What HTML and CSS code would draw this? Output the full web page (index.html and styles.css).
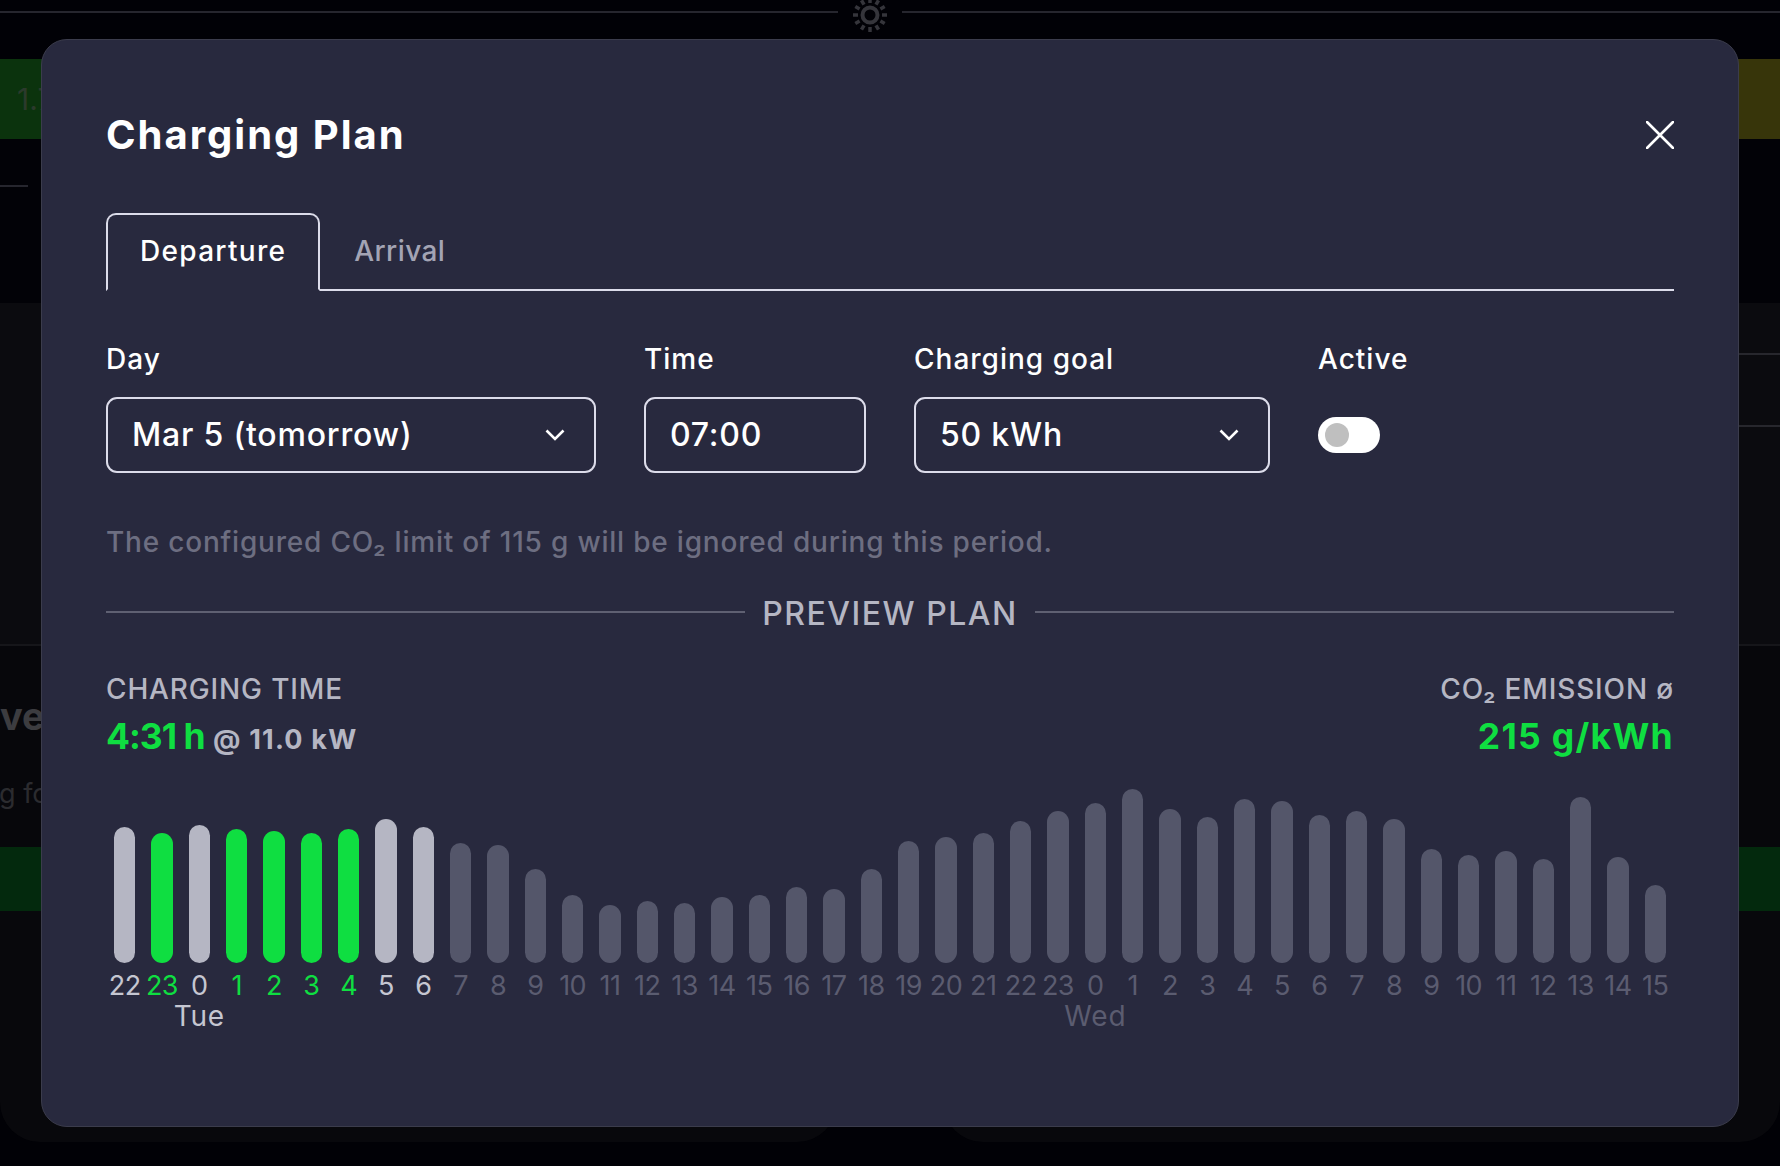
FILE: index.html
```html
<!DOCTYPE html>
<html>
    <head>
        <meta charset="utf-8" />
        <title>Charging Plan</title>
        <link rel="stylesheet" href="styles.css">
    </head>
    <body>
        <div class="page">
            <div class="top-bar">
                <div class="top-line left"></div>
                <svg class="sun" viewBox="0 0 40 40" width="40" height="40">
                    <circle cx="20" cy="20" r="7.5" />
                    <path d="M20 3v5M20 32v5M3 20h5M32 20h5M11.5 5.3l2.5 4.3M26 30.4l2.5 4.3M5.3 11.5l4.3 2.5M30.4 26l4.3 2.5M5.3 28.5l4.3-2.5M30.4 14l4.3-2.5M11.5 34.7l2.5-4.3M26 9.6l2.5-4.3" />
                </svg>
                <div class="top-line"></div>
            </div>
            <div class="band-row">
                <div class="band-green">1.7</div>
                <div class="band-yellow"></div>
            </div>
            <div class="dim-section">
                <div class="dim-line"></div>
            </div>
            <div class="dim-section-2">
                <div class="side-line"></div>
                <div class="side-line second"></div>
            </div>
            <div class="dim-section-3">
                <div class="dim-title">ve</div>
                <div class="dim-text">g fo</div>
            </div>
            <div class="band-wide"></div>
            <div class="bottom-cards">
                <div class="bottom-card"></div>
                <div class="bottom-card"></div>
            </div>
        </div>

        <div class="modal">
            <div class="modal-head">
                <h1>Charging Plan</h1>
                <svg class="close" viewBox="0 0 28 28" width="28" height="28">
                    <path d="M1 1l26 26M27 1L1 27" />
                </svg>
            </div>

            <div class="tabs">
                <div class="tab active">Departure</div>
                <div class="tab">Arrival</div>
            </div>

            <div class="form">
                <div>
                    <label for="day">Day</label>
                    <div class="select-wrap">
                        <select id="day" class="control">
                            <option>Mar 5 (tomorrow)</option>
                        </select>
                        <svg class="chevron" viewBox="0 0 20 12" width="20" height="12">
                            <path d="M1.5 1.5L10 10l8.5-8.5" />
                        </svg>
                    </div>
                </div>
                <div>
                    <label for="time">Time</label>
                    <input id="time" class="control" type="text" value="07:00" />
                </div>
                <div>
                    <label for="goal">Charging goal</label>
                    <div class="select-wrap">
                        <select id="goal" class="control">
                            <option>50 kWh</option>
                        </select>
                        <svg class="chevron" viewBox="0 0 20 12" width="20" height="12">
                            <path d="M1.5 1.5L10 10l8.5-8.5" />
                        </svg>
                    </div>
                </div>
                <div>
                    <label>Active</label>
                    <div class="toggle-wrap">
                        <div class="toggle"><div class="knob"></div></div>
                    </div>
                </div>
            </div>

            <p class="note">The configured CO₂ limit of 115 g will be ignored during this period.</p>

            <div class="divider">
                <div class="divider-line"></div>
                <span>PREVIEW PLAN</span>
                <div class="divider-line"></div>
            </div>

            <div class="summary">
                <div>
                    <div class="summary-label">CHARGING TIME</div>
                    <div class="summary-value"><span class="duration">4:31 h</span> <small>@ 11.0 kW</small></div>
                </div>
                <div class="summary-right">
                    <div class="summary-label">CO₂ EMISSION ø</div>
                    <div class="summary-value emission">215 g/kWh</div>
                </div>
            </div>

            <div class="chart">
                <div class="slot plan"><div class="bar-area"><div class="bar" style="height: 136px"></div></div><div class="hour">22</div></div>
                <div class="slot charge"><div class="bar-area"><div class="bar" style="height: 130px"></div></div><div class="hour">23</div></div>
                <div class="slot plan"><div class="bar-area"><div class="bar" style="height: 138px"></div></div><div class="hour">0</div><div class="day">Tue</div></div>
                <div class="slot charge"><div class="bar-area"><div class="bar" style="height: 134px"></div></div><div class="hour">1</div></div>
                <div class="slot charge"><div class="bar-area"><div class="bar" style="height: 132px"></div></div><div class="hour">2</div></div>
                <div class="slot charge"><div class="bar-area"><div class="bar" style="height: 130px"></div></div><div class="hour">3</div></div>
                <div class="slot charge"><div class="bar-area"><div class="bar" style="height: 134px"></div></div><div class="hour">4</div></div>
                <div class="slot plan"><div class="bar-area"><div class="bar" style="height: 144px"></div></div><div class="hour">5</div></div>
                <div class="slot plan"><div class="bar-area"><div class="bar" style="height: 136px"></div></div><div class="hour">6</div></div>
                <div class="slot"><div class="bar-area"><div class="bar" style="height: 120px"></div></div><div class="hour">7</div></div>
                <div class="slot"><div class="bar-area"><div class="bar" style="height: 118px"></div></div><div class="hour">8</div></div>
                <div class="slot"><div class="bar-area"><div class="bar" style="height: 94px"></div></div><div class="hour">9</div></div>
                <div class="slot"><div class="bar-area"><div class="bar" style="height: 68px"></div></div><div class="hour">10</div></div>
                <div class="slot"><div class="bar-area"><div class="bar" style="height: 58px"></div></div><div class="hour">11</div></div>
                <div class="slot"><div class="bar-area"><div class="bar" style="height: 62px"></div></div><div class="hour">12</div></div>
                <div class="slot"><div class="bar-area"><div class="bar" style="height: 60px"></div></div><div class="hour">13</div></div>
                <div class="slot"><div class="bar-area"><div class="bar" style="height: 66px"></div></div><div class="hour">14</div></div>
                <div class="slot"><div class="bar-area"><div class="bar" style="height: 68px"></div></div><div class="hour">15</div></div>
                <div class="slot"><div class="bar-area"><div class="bar" style="height: 76px"></div></div><div class="hour">16</div></div>
                <div class="slot"><div class="bar-area"><div class="bar" style="height: 74px"></div></div><div class="hour">17</div></div>
                <div class="slot"><div class="bar-area"><div class="bar" style="height: 94px"></div></div><div class="hour">18</div></div>
                <div class="slot"><div class="bar-area"><div class="bar" style="height: 122px"></div></div><div class="hour">19</div></div>
                <div class="slot"><div class="bar-area"><div class="bar" style="height: 126px"></div></div><div class="hour">20</div></div>
                <div class="slot"><div class="bar-area"><div class="bar" style="height: 130px"></div></div><div class="hour">21</div></div>
                <div class="slot"><div class="bar-area"><div class="bar" style="height: 142px"></div></div><div class="hour">22</div></div>
                <div class="slot"><div class="bar-area"><div class="bar" style="height: 152px"></div></div><div class="hour">23</div></div>
                <div class="slot"><div class="bar-area"><div class="bar" style="height: 160px"></div></div><div class="hour">0</div><div class="day">Wed</div></div>
                <div class="slot"><div class="bar-area"><div class="bar" style="height: 174px"></div></div><div class="hour">1</div></div>
                <div class="slot"><div class="bar-area"><div class="bar" style="height: 154px"></div></div><div class="hour">2</div></div>
                <div class="slot"><div class="bar-area"><div class="bar" style="height: 146px"></div></div><div class="hour">3</div></div>
                <div class="slot"><div class="bar-area"><div class="bar" style="height: 164px"></div></div><div class="hour">4</div></div>
                <div class="slot"><div class="bar-area"><div class="bar" style="height: 162px"></div></div><div class="hour">5</div></div>
                <div class="slot"><div class="bar-area"><div class="bar" style="height: 148px"></div></div><div class="hour">6</div></div>
                <div class="slot"><div class="bar-area"><div class="bar" style="height: 152px"></div></div><div class="hour">7</div></div>
                <div class="slot"><div class="bar-area"><div class="bar" style="height: 144px"></div></div><div class="hour">8</div></div>
                <div class="slot"><div class="bar-area"><div class="bar" style="height: 114px"></div></div><div class="hour">9</div></div>
                <div class="slot"><div class="bar-area"><div class="bar" style="height: 108px"></div></div><div class="hour">10</div></div>
                <div class="slot"><div class="bar-area"><div class="bar" style="height: 112px"></div></div><div class="hour">11</div></div>
                <div class="slot"><div class="bar-area"><div class="bar" style="height: 104px"></div></div><div class="hour">12</div></div>
                <div class="slot"><div class="bar-area"><div class="bar" style="height: 166px"></div></div><div class="hour">13</div></div>
                <div class="slot"><div class="bar-area"><div class="bar" style="height: 106px"></div></div><div class="hour">14</div></div>
                <div class="slot"><div class="bar-area"><div class="bar" style="height: 78px"></div></div><div class="hour">15</div></div>
            </div>
        </div>
    </body>
</html>
```

FILE: styles.css
```css
html, body {
    margin: 0;
    padding: 0;
    height: 100%;
    overflow: hidden;
}
body {
    background: #010106;
    font-family: Inter, "Noto Sans", sans-serif;
    color: #fff;
}

/* dimmed page behind the dialog */
.page {
    height: 1166px;
    display: flex;
    flex-direction: column;
}
.top-bar {
    height: 59px;
    display: flex;
    gap: 12px;
    flex-shrink: 0;
}
.top-line {
    flex: 1;
    height: 2px;
    margin-top: 11px;
    background: #26262e;
}
.top-line.left {
    flex: none;
    width: 838px;
}
.sun {
    margin-top: -5px;
}
.sun circle {
    fill: none;
    stroke: #35353b;
    stroke-width: 4;
}
.sun path {
    fill: none;
    stroke: #35353b;
    stroke-width: 3.5;
}
.band-row {
    height: 80px;
    display: flex;
}
.band-green {
    flex: 1;
    background: #0b330d;
    color: #2b3a2c;
    font-size: 30px;
    line-height: 80px;
    padding-left: 17px;
}
.band-yellow {
    flex: 1;
    background: #37350a;
}
.dim-section {
    height: 164px;
    background: #020207;
    padding-top: 46px;
    box-sizing: border-box;
}
.dim-line {
    width: 28px;
    height: 2px;
    background: #26262e;
}
.dim-section-2 {
    height: 341px;
    background: #0b0b0f;
    padding-top: 50px;
    box-sizing: border-box;
}
.side-line {
    height: 2px;
    margin-left: 50%;
    background: #27272d;
}
.side-line.second {
    margin-top: 70px;
}
.dim-section-3 {
    height: 203px;
    background: #07070b;
    border-top: 2px solid #16161a;
    box-sizing: border-box;
    overflow: hidden;
    padding-top: 48px;
}
.dim-title {
    font-size: 38px;
    font-weight: 700;
    line-height: 44px;
    color: #3c3c40;
}
.dim-text {
    margin-top: 39px;
    margin-left: -1px;
    font-size: 27px;
    line-height: 34px;
    color: #2b2b2f;
}
.band-wide {
    height: 64px;
    background: #03290d;
}
.bottom-cards {
    height: 231px;
    display: flex;
    gap: 106px;
}
.bottom-card {
    flex: 1;
    background: #08080c;
    border-radius: 0 0 40px 40px;
}

/* dialog */
.modal {
    position: absolute;
    left: 41px;
    top: 39px;
    width: 1698px;
    height: 1088px;
    box-sizing: border-box;
    padding: 64px 64px 0;
    background: #28293e;
    border: 1px solid #3b3c4c;
    border-radius: 26px;
}
.modal-head {
    display: flex;
    justify-content: space-between;
    align-items: center;
    height: 62px;
}
h1 {
    margin: -2px 0 0;
    font-size: 40px;
    font-weight: 700;
    letter-spacing: 2px;
}
.close path {
    fill: none;
    stroke: #fff;
    stroke-width: 2.6;
    stroke-linecap: round;
}
.tabs {
    display: flex;
    height: 78px;
    margin-top: 47px;
    box-sizing: border-box;
    border-bottom: 2px solid #dcdcea;
}
.tab {
    height: 78px;
    box-sizing: border-box;
    padding: 0 34px;
    line-height: 76px;
    font-size: 28px;
    font-weight: 500;
    letter-spacing: 0.4px;
    color: #a3a4b4;
}
.tab.active {
    color: #fff;
    border: 2px solid #dcdcea;
    border-bottom: 2px solid #28293e;
    border-radius: 10px 10px 0 0;
    padding: 0 32px;
    line-height: 72px;
    letter-spacing: 1.3px;
}
.form {
    display: grid;
    grid-template-columns: 490px 222px 356px 1fr;
    column-gap: 48px;
    margin-top: 50px;
}
label {
    display: block;
    height: 36px;
    line-height: 36px;
    margin-bottom: 20px;
    font-size: 28px;
    font-weight: 500;
    letter-spacing: 1px;
}
.control {
    display: block;
    width: 100%;
    height: 76px;
    box-sizing: border-box;
    padding: 0 24px 2px;
    appearance: none;
    background: transparent;
    border: 2px solid #dcdcea;
    border-radius: 11px;
    color: #fff;
    font-family: inherit;
    font-size: 32px;
    font-weight: 500;
    letter-spacing: 0.8px;
}
.select-wrap {
    position: relative;
}
.chevron {
    position: absolute;
    right: 31px;
    top: 32px;
}
.chevron path {
    fill: none;
    stroke: #fff;
    stroke-width: 2.6;
}
.toggle-wrap {
    height: 76px;
    display: flex;
    align-items: center;
}
.toggle {
    width: 62px;
    height: 36px;
    box-sizing: border-box;
    padding: 6px 7px;
    background: #fff;
    border-radius: 18px;
}
.knob {
    width: 24px;
    height: 24px;
    border-radius: 50%;
    background: #bfbfbf;
}
.note {
    margin: 51px 0 0;
    height: 36px;
    line-height: 36px;
    font-size: 28px;
    font-weight: 500;
    letter-spacing: 0.8px;
    color: #6d6e81;
}
.divider {
    display: flex;
    align-items: center;
    gap: 17px;
    height: 40px;
    margin-top: 33px;
    font-size: 32px;
    font-weight: 500;
    letter-spacing: 1.5px;
    color: #b5b6c3;
}
.divider-line {
    flex: 1;
    height: 2px;
    margin-bottom: 2px;
    background: #5f6072;
}
.summary {
    display: flex;
    justify-content: space-between;
    margin-top: 38px;
}
.summary-right {
    text-align: right;
}
.summary-label {
    height: 36px;
    line-height: 36px;
    font-size: 28px;
    font-weight: 500;
    letter-spacing: 0.85px;
    color: #b5b6c3;
}
.summary-value {
    height: 44px;
    margin-top: 8px;
    line-height: 44px;
    font-size: 35.5px;
    font-weight: 700;
    color: #0fde41;
}
.summary-value.emission {
    letter-spacing: 1.3px;
}
.duration {
    letter-spacing: -1px;
}
.summary-value small {
    font-size: 27px;
    letter-spacing: 1.2px;
    color: #b5b6c3;
}
.chart {
    display: grid;
    grid-template-columns: repeat(42, 1fr);
    margin-top: 24px;
}
.slot {
    min-width: 0;
    display: flex;
    flex-direction: column;
    align-items: center;
    color: #5b5c70;
}
.slot.plan {
    color: #c5c6d1;
}
.slot.charge {
    color: #0fde41;
}
.bar-area {
    height: 180px;
    display: flex;
    align-items: flex-end;
}
.bar {
    width: 21.5px;
    border-radius: 11px;
    background: #54566a;
}
.plan .bar {
    background: #b5b6c3;
}
.charge .bar {
    background: #0fde41;
}
.hour {
    margin-top: 8px;
    height: 30px;
    line-height: 30px;
    font-size: 27px;
    letter-spacing: -0.5px;
}
.day {
    height: 30px;
    line-height: 30px;
    font-size: 28px;
    letter-spacing: 0.8px;
}
```
